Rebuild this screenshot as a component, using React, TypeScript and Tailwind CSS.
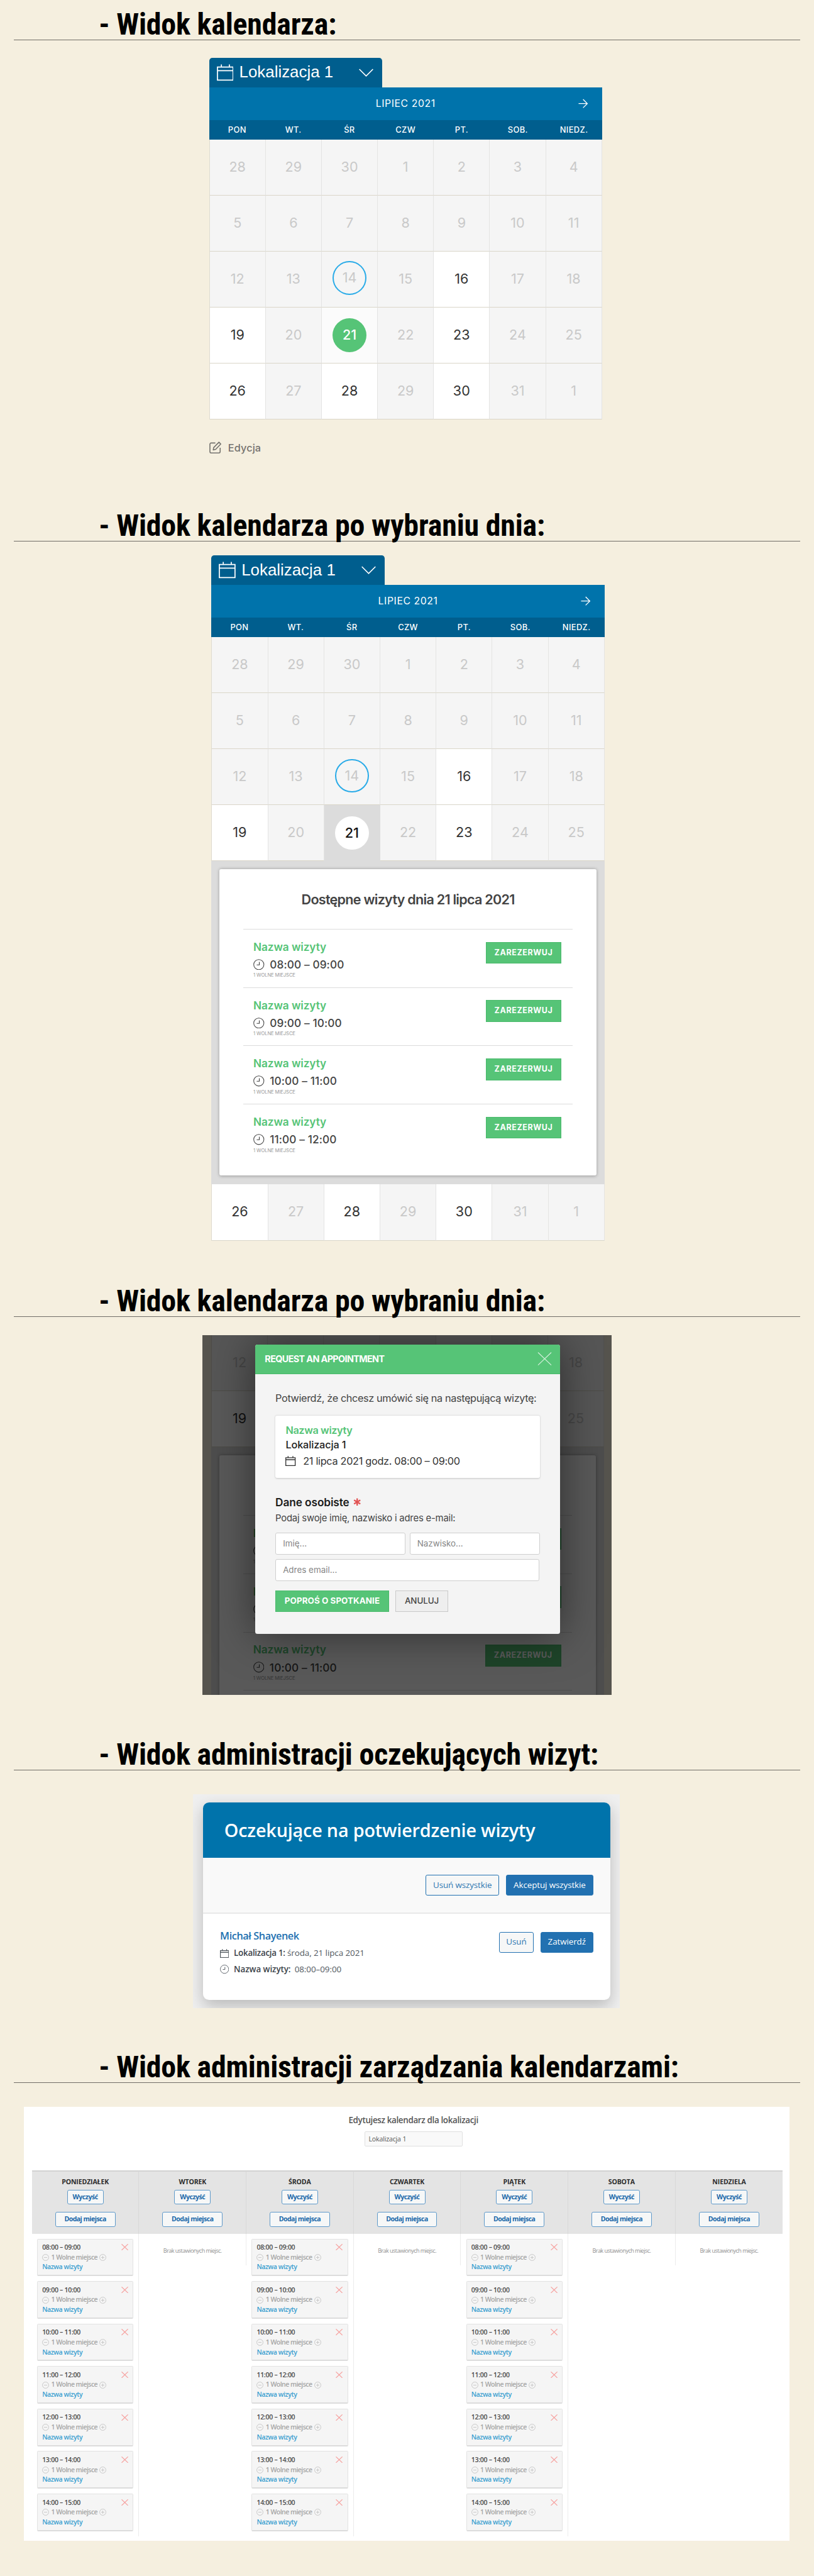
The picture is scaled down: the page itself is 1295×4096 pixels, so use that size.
import React from "react";

/* ---------- icons ---------- */

function CalendarIcon({ className }: { className: string }) {
  return (
    <svg viewBox="0 0 28 28" fill="none" stroke="currentColor" strokeWidth="1.8" className={className}>
      <path d="M1 4.800h26v21.700H1zM1 10.800h26M7.500 .5v4.500M20.800 .5v4.500" />
    </svg>
  );
}

function SmallCalendarIcon({ className }: { className: string }) {
  return (
    <svg viewBox="0 0 17 17" fill="none" stroke="currentColor" className={className}>
      <path d="M.7 3h15.600v13H.7zM.7 6.300h15.600M4.500 .3v3M12.500 .3v3" strokeWidth="1.4" />
    </svg>
  );
}

function ClockIcon({ className }: { className: string }) {
  return (
    <svg viewBox="0 0 18 18" fill="none" stroke="currentColor" className={className}>
      <circle cx="9" cy="9" r="8.300" strokeWidth="1.1" />
      <path d="M9.800 4.500v5H5.500" strokeWidth="1.2" />
    </svg>
  );
}

function ChevronIcon({ className }: { className: string }) {
  return (
    <svg viewBox="0 0 24 14" fill="none" stroke="currentColor" strokeWidth="1.7" className={className}>
      <path d="M.7 1 12 12.300 23.300 1" />
    </svg>
  );
}

function ArrowIcon({ className }: { className: string }) {
  return (
    <svg viewBox="0 0 16 16" fill="none" stroke="currentColor" strokeWidth="1.4" className={className}>
      <path d="M.5 8h14.500M8 1l7 7-7 7" />
    </svg>
  );
}

function EditIcon({ className }: { className: string }) {
  return (
    <svg viewBox="0 0 20 20" fill="none" stroke="currentColor" strokeWidth="1.7" strokeLinejoin="round" className={className}>
      <path d="M10 2.500H3A2 2 0 0 0 1 4.500V17a2 2 0 0 0 2 2h13a2 2 0 0 0 2-2v-6.500" />
      <path d="M16 1.200 19 4.200 10.500 13 6.500 14 7.300 10z" />
    </svg>
  );
}

function CrossIcon({ className }: { className: string }) {
  return (
    <svg viewBox="0 0 24 22" fill="none" stroke="currentColor" className={className} preserveAspectRatio="none">
      <path d="M1 .5 23 21.500M23 .5 1 21.500" vectorEffect="non-scaling-stroke" strokeWidth="1.2" />
    </svg>
  );
}

function RoundIcon({ plus }: { plus?: boolean }) {
  return (
    <svg viewBox="0 0 12 12" fill="none" stroke="#c4c4c4" strokeWidth="1" className="size-[11.5px] shrink-0">
      <circle cx="6" cy="6" r="5.400" />
      <path d={plus ? "M3.300 6h5.400M6 3.300v5.400" : "M3.300 6h5.400"} />
    </svg>
  );
}

/* ---------- shared pieces ---------- */

function Heading({ children }: { children: React.ReactNode }) {
  return (
    <h2 className="mx-[23px] h-[67px] shrink-0 whitespace-pre border-b border-[#706c66] pt-[18px] pl-[141px] font-['Roboto_Condensed',sans-serif] text-[50px] leading-[46px] font-bold tracking-[-0.2px] text-black">
      {children}
    </h2>
  );
}

type Mark = "open" | "today" | "hover" | "selected";
type Day = [number, Mark?];

const WEEKS: Day[][] = [
  [[28], [29], [30], [1], [2], [3], [4]],
  [[5], [6], [7], [8], [9], [10], [11]],
  [[12], [13], [14, "today"], [15], [16, "open"], [17], [18]],
  [[19, "open"], [20], [21, "hover"], [22], [23, "open"], [24], [25]],
  [[26, "open"], [27], [28, "open"], [29], [30, "open"], [31], [1]],
];

const WEEKS_SELECTED: Day[][] = WEEKS.map((w, i) =>
  i === 3 ? w.map((d): Day => (d[0] === 21 ? [21, "selected"] : d)) : w,
);

function DayCell({ day }: { day: Day }) {
  const [n, mark] = day;
  const bg =
    mark === "open" ? "bg-white text-[#333]" : mark === "hover" ? "bg-[#fbfbfb]" : mark === "selected" ? "bg-[#dcdcdc] border-[#dcdcdc]!" : "bg-[#f5f5f5] text-[#c9c9c9]";
  const ring =
    mark === "today"
      ? "border-[2.200px] border-[#29abe8] -mt-[4px]"
      : mark === "hover"
        ? "bg-[#56c477] font-medium text-white"
        : mark === "selected"
          ? "bg-white font-medium text-[#111]"
          : "-mt-[1px]";
  return (
    <div className={`flex items-center justify-center border-r border-b border-r-[#e4e4e3] border-b-[#dad6c9] ${bg}`}>
      <span className={`flex size-[56px] items-center justify-center rounded-full text-[22.5px] leading-none ${ring}`}>{n}</span>
    </div>
  );
}

function WeekRow({ week, tall }: { week: Day[]; tall?: boolean }) {
  return (
    <div className={`grid grid-cols-7 border-l border-[#dedbd0] ${tall ? "h-[94px]" : "h-[92.850px]"}`}>
      {week.map((d, i) => (
        <DayCell key={i} day={d} />
      ))}
    </div>
  );
}

function CalendarHead() {
  return (
    <>
      <div className="flex h-[49.500px] w-[287.500px] items-center rounded-t-[5px] bg-[#005e8e] pr-[14.500px] pl-[12.500px] text-white">
        <CalendarIcon className="size-[28px]" />
        <span className="ml-[9.500px] font-['Liberation_Sans',sans-serif] text-[27px] leading-none">Lokalizacja 1</span>
        <ChevronIcon className="ml-auto h-[14px] w-[24px]" />
      </div>
      <div className="relative flex h-[54.200px] items-center justify-center bg-[#0073ab] text-white">
        <span className="text-[16.500px] leading-none tracking-[0.6px]">LIPIEC 2021</span>
        <ArrowIcon className="absolute right-[23px] size-[16px]" />
      </div>
      <div className="grid h-[32.600px] grid-cols-7 items-center bg-[#005e8e] text-center text-[13.500px] leading-none font-medium tracking-[0.35px] text-white">
        {["PON", "WT.", "ŚR", "CZW", "PT.", "SOB.", "NIEDZ."].map((d) => (
          <span key={d}>{d}</span>
        ))}
      </div>
    </>
  );
}

function VisitRow({ time }: { time: string }) {
  return (
    <div className="flex h-[96.750px] items-start justify-between border-t border-[#dcdcdc] pr-[18.300px] pl-[16.500px]">
      <div className="pt-[15.500px]">
        <div className="text-[18px] leading-[27px] font-semibold tracking-[-0.1px] text-[#56c477]">Nazwa wizyty</div>
        <div className="flex h-[31px] items-center text-[18px] leading-none font-medium tracking-[0.12px] text-[#444]">
          <ClockIcon className="mr-[9px] size-[18.300px]" />
          {time}
        </div>
        <div className="text-[8px] leading-[6px] tracking-[-0.12px] text-[#999]">1 WOLNE MIEJSCE</div>
      </div>
      <button className="mt-[20.500px] h-[36px] w-[126px] border border-[#49b96b] bg-[#56c477] text-[13px] leading-none font-bold tracking-[0.65px] text-white">
        ZAREZERWUJ
      </button>
    </div>
  );
}

function VisitsPanel() {
  return (
    <div className="h-[535.500px] bg-[#dcdcdc] px-[13.600px] pt-[12.800px]">
      <div className="h-[508.600px] rounded-[3px] bg-white px-[39.500px] shadow-[0_1px_6px_rgba(0,0,0,0.3)]">
        <h3 className="h-[99.400px] pt-[36.500px] text-center text-[22.500px] leading-[28px] font-semibold tracking-[-0.78px] text-[#444]">
          Dostępne wizyty dnia 21 lipca 2021
        </h3>
        {["08:00 – 09:00", "09:00 – 10:00", "10:00 – 11:00", "11:00 – 12:00"].map((t) => (
          <VisitRow key={t} time={t} />
        ))}
      </div>
    </div>
  );
}

/* ---------- request dialog ---------- */

function Field({ text, className }: { text: string; className: string }) {
  return (
    <div className={`flex h-[36px] items-center rounded-[3px] border-[1.5px] border-[#cfcfcf] bg-white pl-[11.500px] text-[14px] leading-none text-[#858585] ${className}`}>
      {text}
    </div>
  );
}

function RequestDialog() {
  return (
    <div className="absolute top-[15px] left-[87px] h-[480px] w-[506.500px] overflow-hidden rounded-[4px] bg-[#f4f4f4]">
      <div className="flex h-[49px] items-center justify-between border-b border-[#49b96b] bg-[#56c477] pr-[14px] pl-[16.500px]">
        <span className="text-[15px] leading-none font-bold tracking-[-0.65px] text-white">REQUEST AN APPOINTMENT</span>
        <CrossIcon className="h-[22px] w-[24px] text-white/75" />
      </div>
      <div className="pr-[34px] pl-[34px]">
        <p className="pt-[28.500px] text-[17px] leading-[24px] tracking-[-0.41px] whitespace-nowrap text-[#444]">
          Potwierdź, że chcesz umówić się na następującą wizytę:
        </p>
        <div className="mt-[16.200px] h-[103.600px] rounded-[3px] bg-white pt-[12.500px] pl-[17px] shadow-[0_1px_3px_rgba(0,0,0,0.2)]">
          <div className="text-[17px] leading-[24px] font-semibold tracking-[-0.4px] text-[#56c477]">Nazwa wizyty</div>
          <div className="text-[17px] leading-[24px] font-medium tracking-[-0.15px] text-[#222]">Lokalizacja 1</div>
          <div className="flex h-[30px] items-center text-[17px] leading-none tracking-[-0.33px] text-[#333]">
            <SmallCalendarIcon className="mr-[12px] size-[17px]" />
            21 lipca 2021 godz. 08:00 – 09:00
          </div>
        </div>
        <div className="mt-[25px] flex h-[30px] items-center gap-[7px] text-[18px] leading-none font-semibold tracking-[-0.1px] text-[#1c1c1c]">
          Dane osobiste
          <svg viewBox="0 0 14 14" className="size-[13px]" stroke="#e25353" strokeWidth="2.600">
            <path d="M7 .5v13M1.400 3.700l11.200 6.600M12.600 3.700 1.400 10.300" />
          </svg>
        </div>
        <p className="text-[15.500px] leading-[24px] tracking-[-0.22px] text-[#444]">Podaj swoje imię, nazwisko i adres e-mail:</p>
        <div className="mt-[12px] flex gap-[7px]">
          <Field text="Imię..." className="w-[216px]" />
          <Field text="Nazwisko..." className="w-[216px]" />
        </div>
        <Field text="Adres email..." className="mt-[8px] w-[438px]" />
        <div className="mt-[15.600px] flex gap-[11px]">
          <button className="h-[36px] w-[188.500px] border border-[#49b96b] bg-[#56c477] text-[14px] leading-none font-bold tracking-[0.05px] text-white">
            POPROŚ O SPOTKANIE
          </button>
          <button className="h-[36px] w-[87px] border border-[#c9c9c9] bg-[#eeeeee] text-[14px] leading-none font-medium tracking-[-0.1px] text-[#444]">
            ANULUJ
          </button>
        </div>
      </div>
    </div>
  );
}

/* ---------- pending visits ---------- */

function AdminButton({ text, primary, className }: { text: string; primary?: boolean; className: string }) {
  return (
    <button
      className={`h-[34.500px] rounded-[3px] border-[1.5px] border-[#2271b1] text-[14px] leading-none whitespace-nowrap ${primary ? "bg-[#2271b1] font-medium tracking-[-0.1px] text-white" : "bg-[#f6f7f7] text-[#2f77b2]"} ${className}`}
    >
      {text}
    </button>
  );
}

function PendingVisits() {
  return (
    <div className="mt-[40px] ml-[320.500px] h-[355px] w-[708.500px] overflow-hidden bg-[#efefef] pt-[13px] pl-[16.700px] font-['Open_Sans',sans-serif]">
      <div className="h-[327.700px] w-[675.400px] rounded-[10px] bg-white shadow-[0_10px_26px_rgba(0,0,0,0.22)]">
        <h3 className="flex h-[92.700px] items-center rounded-t-[10px] bg-[#0073ab] pl-[35px] text-[30px] leading-none font-semibold tracking-[-0.18px] text-white">
          Oczekujące na potwierdzenie wizyty
        </h3>
        <div className="flex h-[92.300px] items-center justify-end gap-[11.500px] border-b-[2.200px] border-[#e8e8e8] bg-[#f9f9f9] pr-[28px]">
          <AdminButton text="Usuń wszystkie" className="w-[121.500px] tracking-[-0.13px]" />
          <AdminButton text="Akceptuj wszystkie" primary className="w-[145px]" />
        </div>
        <div className="flex justify-between pr-[28px] pl-[28px]">
          <div className="pt-[24px] text-[14px] leading-none whitespace-nowrap text-[#50575e]">
            <div className="h-[26px] text-[17px] leading-[26px] font-semibold tracking-[-0.45px] text-[#2271b1]">Michał Shayenek</div>
            <div className="flex h-[32px] items-center">
              <SmallCalendarIcon className="mr-[8px] size-[15px]" />
              <span className="font-semibold tracking-[-0.3px] text-[#3c434a]">Lokalizacja 1:</span>
              <span className="ml-[3.500px] tracking-[-0.08px]">środa, 21 lipca 2021</span>
            </div>
            <div className="flex h-[21px] items-center">
              <ClockIcon className="mr-[8px] size-[15px]" />
              <span className="font-semibold tracking-[-0.08px] text-[#3c434a]">Nazwa wizyty:</span>
              <span className="ml-[6.500px] tracking-[-0.05px]">08:00–09:00</span>
            </div>
          </div>
          <div className="flex gap-[11px] pt-[30px]">
            <AdminButton text="Usuń" className="w-[57.500px]" />
            <AdminButton text="Zatwierdź" primary className="w-[88px]" />
          </div>
        </div>
      </div>
    </div>
  );
}

/* ---------- weekly schedule ---------- */

const SLOTS = ["08:00 – 09:00", "09:00 – 10:00", "10:00 – 11:00", "11:00 – 12:00", "12:00 – 13:00", "13:00 – 14:00", "14:00 – 15:00"];

const COLUMNS: [string, boolean][] = [
  ["PONIEDZIAŁEK", true],
  ["WTOREK", false],
  ["ŚRODA", true],
  ["CZWARTEK", false],
  ["PIĄTEK", true],
  ["SOBOTA", false],
  ["NIEDZIELA", false],
];

function Slot({ time }: { time: string }) {
  return (
    <div className="relative h-[62.300px] rounded-[2px] border border-b-[2.200px] border-[#e2e2e2] border-b-[#dcdcdc] bg-[#f5f5f5] pt-[5.800px] pl-[7.500px] text-[11px] leading-[16.300px] whitespace-nowrap">
      <div className="font-semibold tracking-[-0.3px] text-[#4a4a4a]">{time}</div>
      <div className="flex items-center font-semibold tracking-[-0.58px] text-[#a5a5a5]">
        <RoundIcon />
        <span className="mx-[3.500px]">1 Wolne miejsce</span>
        <RoundIcon plus />
      </div>
      <div className="font-semibold tracking-[-0.42px] text-[#3a9fd0]">Nazwa wizyty</div>
      <CrossIcon className="absolute top-[8px] right-[7.500px] h-[10.700px] w-[11.600px] text-[#f6a3a1]" />
    </div>
  );
}

function DayColumn({ name, filled, last }: { name: string; filled: boolean; last: boolean }) {
  const edge = last ? "border-r-0" : "border-r";
  const button = "rounded-[3px] border-[1.5px] border-[#5f9aca] bg-[#f6f7f7] text-[11px] leading-none font-bold text-[#2069aa]";
  return (
    <div>
      <div className={`flex h-[105.400px] flex-col items-center border-t-[2.200px] border-t-[#d2d2d2] border-r-[#d8d8d8] bg-[#e4e4e4] pt-[7.500px] ${edge}`}>
        <div className="h-[20px] text-[11px] leading-[20px] font-bold tracking-[-0.13px] text-[#2c2c2c]">{name}</div>
        <button className={`mt-[3px] h-[24.700px] w-[60.500px] tracking-[-0.5px] ${button}`}>Wyczyść</button>
        <button className={`mt-[11.600px] h-[25px] w-[100px] tracking-[-0.55px] ${button}`}>Dodaj miejsca</button>
      </div>
      {filled ? (
        <div className={`flex flex-col gap-[8.200px] border-[#ececec] px-[8.500px] py-[8.300px] ${edge}`}>
          {SLOTS.map((t) => (
            <Slot key={t} time={t} />
          ))}
        </div>
      ) : (
        <div className={`flex h-[52.500px] items-center justify-center border-[#ececec] pt-[3px] text-[9.500px] leading-none tracking-[-0.59px] text-[#909090] ${edge}`}>
          Brak ustawionych miejsc.
        </div>
      )}
    </div>
  );
}

function Schedule() {
  return (
    <div className="mt-[39px] ml-[40px] h-[720px] w-[1270px] bg-white px-[13px] pt-[11px] font-['Open_Sans',sans-serif]">
      <div className="flex flex-col items-center pl-[22px]">
        <div className="h-[24px] text-[14px] leading-[25px] font-semibold tracking-[-0.36px] text-[#555]">Edytujesz kalendarz dla lokalizacji</div>
        <div className="mt-[6.500px] flex h-[24.500px] w-[162.500px] items-center rounded-[2px] border border-[#e0e0e0] bg-[#f9f9f9] pl-[6px] text-[11px] leading-none font-medium tracking-[-0.15px] text-[#555]">
          Lokalizacja 1
        </div>
      </div>
      <div className="mt-[39.300px] grid w-[1246px] grid-cols-7 items-start">
        {COLUMNS.map(([name, filled], i) => (
          <DayColumn key={name} name={name} filled={filled} last={i === 6} />
        ))}
      </div>
    </div>
  );
}

/* ---------- page ---------- */

export default function App() {
  return (
    <div className="h-[4096px] w-full overflow-hidden bg-[#f5efdf]">
      <div className="flex w-[1351px] flex-col font-['Inter',sans-serif] [zoom:0.9587]">
        <section className="h-[831px] shrink-0">
          <Heading>- Widok kalendarza:</Heading>
          <div className="mt-[28.500px] ml-[347px] w-[652px]">
            <CalendarHead />
            {WEEKS.map((w, i) => (
              <WeekRow key={i} week={w} />
            ))}
            <div className="mt-[33.500px] flex h-[26px] items-center gap-[11.500px] text-[17px] leading-none font-medium tracking-[0.1px] text-[#75736f]">
              <EditIcon className="size-[20px]" />
              Edycja
            </div>
          </div>
        </section>

        <section className="h-[1286px] shrink-0">
          <Heading>- Widok kalendarza po wybraniu dnia:</Heading>
          <div className="mt-[22.800px] ml-[350.800px] w-[652.500px]">
            <CalendarHead />
            {WEEKS_SELECTED.slice(0, 4).map((w, i) => (
              <WeekRow key={i} week={w} />
            ))}
            <VisitsPanel />
            <WeekRow week={WEEKS_SELECTED[4]} tall />
          </div>
        </section>

        <section className="h-[752px] shrink-0">
          <Heading>- Widok kalendarza po wybraniu dnia:</Heading>
          <div className="relative mt-[31px] ml-[336px] h-[596px] w-[679px] overflow-hidden">
            <div className="ml-[14.500px] w-[652px]">
              <WeekRow week={WEEKS_SELECTED[2]} />
              <WeekRow week={WEEKS_SELECTED[3]} />
              <VisitsPanel />
            </div>
            <div className="absolute inset-0 bg-black/65" />
            <div className="absolute top-[15px] left-[87px] h-[480px] w-[506.500px] rounded-[4px] shadow-[0_0_70px_rgba(0,0,0,0.5)]" />
            <RequestDialog />
          </div>
        </section>

        <section className="h-[519px] shrink-0">
          <Heading>- Widok administracji oczekujących wizyt:</Heading>
          <PendingVisits />
        </section>

        <section className="h-[884px] shrink-0">
          <Heading>- Widok administracji zarządzania kalendarzami:</Heading>
          <Schedule />
        </section>
      </div>
    </div>
  );
}
